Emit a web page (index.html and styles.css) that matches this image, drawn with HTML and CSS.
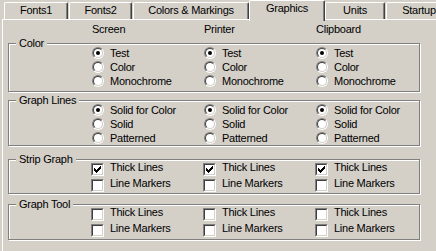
FILE: index.html
```html
<!DOCTYPE html>
<html>
<head>
<meta charset="utf-8">
<link rel="stylesheet" href="styles.css">
</head>
<body>
<div class="dialog">
  <div class="tabs">
    <div class="tab w-fonts1">Fonts1</div>
    <div class="tab w-fonts2">Fonts2</div>
    <div class="tab w-colors">Colors &amp; Markings</div>
    <div class="tab tab-active w-graphics">Graphics</div>
    <div class="tab w-units">Units</div>
    <div class="tab w-startup">Startup</div>
  </div>
  <div class="panel">
    <div class="cols-head"><span>Screen</span><span>Printer</span><span>Clipboard</span></div>

    <div class="group g-color">
      <span class="legend">Color</span>
      <div class="grid rows-radio">
        <div class="item"><span class="radio on"></span><span class="lbl">Test</span></div>
        <div class="item"><span class="radio on"></span><span class="lbl">Test</span></div>
        <div class="item"><span class="radio on"></span><span class="lbl">Test</span></div>
        <div class="item"><span class="radio"></span><span class="lbl">Color</span></div>
        <div class="item"><span class="radio"></span><span class="lbl">Color</span></div>
        <div class="item"><span class="radio"></span><span class="lbl">Color</span></div>
        <div class="item"><span class="radio"></span><span class="lbl">Monochrome</span></div>
        <div class="item"><span class="radio"></span><span class="lbl">Monochrome</span></div>
        <div class="item"><span class="radio"></span><span class="lbl">Monochrome</span></div>
      </div>
    </div>

    <div class="group g-lines">
      <span class="legend">Graph Lines</span>
      <div class="grid rows-radio">
        <div class="item"><span class="radio on"></span><span class="lbl">Solid for Color</span></div>
        <div class="item"><span class="radio on"></span><span class="lbl">Solid for Color</span></div>
        <div class="item"><span class="radio on"></span><span class="lbl">Solid for Color</span></div>
        <div class="item"><span class="radio"></span><span class="lbl">Solid</span></div>
        <div class="item"><span class="radio"></span><span class="lbl">Solid</span></div>
        <div class="item"><span class="radio"></span><span class="lbl">Solid</span></div>
        <div class="item"><span class="radio"></span><span class="lbl">Patterned</span></div>
        <div class="item"><span class="radio"></span><span class="lbl">Patterned</span></div>
        <div class="item"><span class="radio"></span><span class="lbl">Patterned</span></div>
      </div>
    </div>

    <div class="group g-strip">
      <span class="legend">Strip Graph</span>
      <div class="grid rows-check">
        <div class="item item-check"><span class="check"><span class="check-in"><svg width="9" height="9" viewBox="0 0 9 9" shape-rendering="crispEdges"><path d="M1 3h1v3H1z M2 4h1v3H2z M3 5h1v3H3z M4 4h1v3H4z M5 3h1v3H5z M6 2h1v3H6z M7 1h1v3H7z" fill="#000"/></svg></span></span><span class="lbl">Thick Lines</span></div>
        <div class="item item-check"><span class="check"><span class="check-in"><svg width="9" height="9" viewBox="0 0 9 9" shape-rendering="crispEdges"><path d="M1 3h1v3H1z M2 4h1v3H2z M3 5h1v3H3z M4 4h1v3H4z M5 3h1v3H5z M6 2h1v3H6z M7 1h1v3H7z" fill="#000"/></svg></span></span><span class="lbl">Thick Lines</span></div>
        <div class="item item-check"><span class="check"><span class="check-in"><svg width="9" height="9" viewBox="0 0 9 9" shape-rendering="crispEdges"><path d="M1 3h1v3H1z M2 4h1v3H2z M3 5h1v3H3z M4 4h1v3H4z M5 3h1v3H5z M6 2h1v3H6z M7 1h1v3H7z" fill="#000"/></svg></span></span><span class="lbl">Thick Lines</span></div>
        <div class="item item-check"><span class="check"><span class="check-in"></span></span><span class="lbl">Line Markers</span></div>
        <div class="item item-check"><span class="check"><span class="check-in"></span></span><span class="lbl">Line Markers</span></div>
        <div class="item item-check"><span class="check"><span class="check-in"></span></span><span class="lbl">Line Markers</span></div>
      </div>
    </div>

    <div class="group g-tool">
      <span class="legend">Graph Tool</span>
      <div class="grid rows-check">
        <div class="item item-check"><span class="check"><span class="check-in"></span></span><span class="lbl">Thick Lines</span></div>
        <div class="item item-check"><span class="check"><span class="check-in"></span></span><span class="lbl">Thick Lines</span></div>
        <div class="item item-check"><span class="check"><span class="check-in"></span></span><span class="lbl">Thick Lines</span></div>
        <div class="item item-check"><span class="check"><span class="check-in"></span></span><span class="lbl">Line Markers</span></div>
        <div class="item item-check"><span class="check"><span class="check-in"></span></span><span class="lbl">Line Markers</span></div>
        <div class="item item-check"><span class="check"><span class="check-in"></span></span><span class="lbl">Line Markers</span></div>
      </div>
    </div>
  </div>
</div>
</body>
</html>
```

FILE: styles.css
```css
* { box-sizing: border-box; }
html, body { margin: 0; padding: 0; }
body {
  background: #d4d0c8;
  font-family: "Liberation Sans", Arial, sans-serif;
  font-size: 11px;
  line-height: 13px;
  letter-spacing: -0.25px;
  color: #000;
  width: 436px;
  height: 251px;
  overflow: hidden;
}
.dialog { width: 436px; height: 251px; overflow: hidden; }

/* tabs */
.tabs {
  display: flex;
  align-items: flex-end;
  height: 19px;
  padding-left: 4px;
}
.tab {
  flex: 0 0 auto;
  height: 17px;
  margin-right: 1px;
  border: 1px solid;
  border-bottom: 0;
  border-color: #fff #404040 #fff #fff;
  border-radius: 2px 2px 0 0;
  box-shadow: inset -1px 0 #808080;
  text-align: center;
  padding-top: 1px;
  white-space: nowrap;
  background: #d4d0c8;
}
.tab-active {
  position: relative;
  z-index: 1;
  height: 21px;
  margin-bottom: -2px;
  margin-left: -1px;
  margin-right: 0;
  padding-top: 1px;
}
.w-fonts1 { width: 64px; }
.w-fonts2 { width: 63px; }
.w-colors { width: 116px; }
.w-graphics { width: 76px; }
.w-units { width: 60px; }
.w-startup { width: 66px; }

/* panel */
.panel {
  margin-left: 2px;
  width: 480px;
  height: 240px;
  border-top: 1px solid #fff;
  border-left: 1px solid #fff;
  padding-top: 3px;
}
.cols-head {
  display: grid;
  grid-template-columns: repeat(3, 112px);
  padding-left: 89px;
  height: 13px;
}

/* group boxes */
.group {
  position: relative;
  margin-left: 5px;
  width: 412px;
  border: 1px solid #808080;
  box-shadow: inset 1px 1px #fff, 1px 1px #fff;
  padding-left: 83px;
}
.legend {
  position: absolute;
  top: -7px;
  left: 7px;
  padding: 0 3px;
  background: #d4d0c8;
  white-space: nowrap;
}
.g-color { margin-top: 7px; padding-top: 2px; padding-bottom: 3px; }
.g-lines { margin-top: 8px; padding-top: 2px; padding-bottom: 0; }
.g-strip { margin-top: 13px; padding-top: 1px; padding-bottom: 0; }
.g-tool { margin-top: 10px; padding-top: 1px; padding-bottom: 1px; }

.grid {
  display: grid;
  grid-template-columns: repeat(3, 112px);
}
.rows-radio { grid-auto-rows: 14px; }
.rows-check { grid-auto-rows: 16px; }

.item {
  display: flex;
  align-items: center;
  white-space: nowrap;
}
.item-check { align-items: flex-start; }
.lbl { margin-left: 6px; }

/* radio */
.radio {
  flex: none;
  position: relative;
  width: 12px;
  height: 12px;
  border-radius: 50%;
  border: 1px solid;
  border-color: #808080 #fff #fff #808080;
}
.radio::before {
  content: "";
  position: absolute;
  inset: 0;
  border-radius: 50%;
  border: 1px solid;
  border-color: #404040 #d4d0c8 #d4d0c8 #404040;
  background: #fff;
}
.radio.on::after {
  content: "";
  position: absolute;
  left: 3px;
  top: 3px;
  width: 4px;
  height: 4px;
  border-radius: 50%;
  background: #000;
}

/* checkbox */
.check {
  flex: none;
  width: 13px;
  height: 13px;
  margin-left: -1px;
  margin-top: 2px;
  border: 1px solid;
  border-color: #808080 #fff #fff #808080;
}
.check-in {
  display: block;
  width: 11px;
  height: 11px;
  border: 1px solid;
  border-color: #404040 #d4d0c8 #d4d0c8 #404040;
  background: #fff;
}
.check-in svg { display: block; }
```
